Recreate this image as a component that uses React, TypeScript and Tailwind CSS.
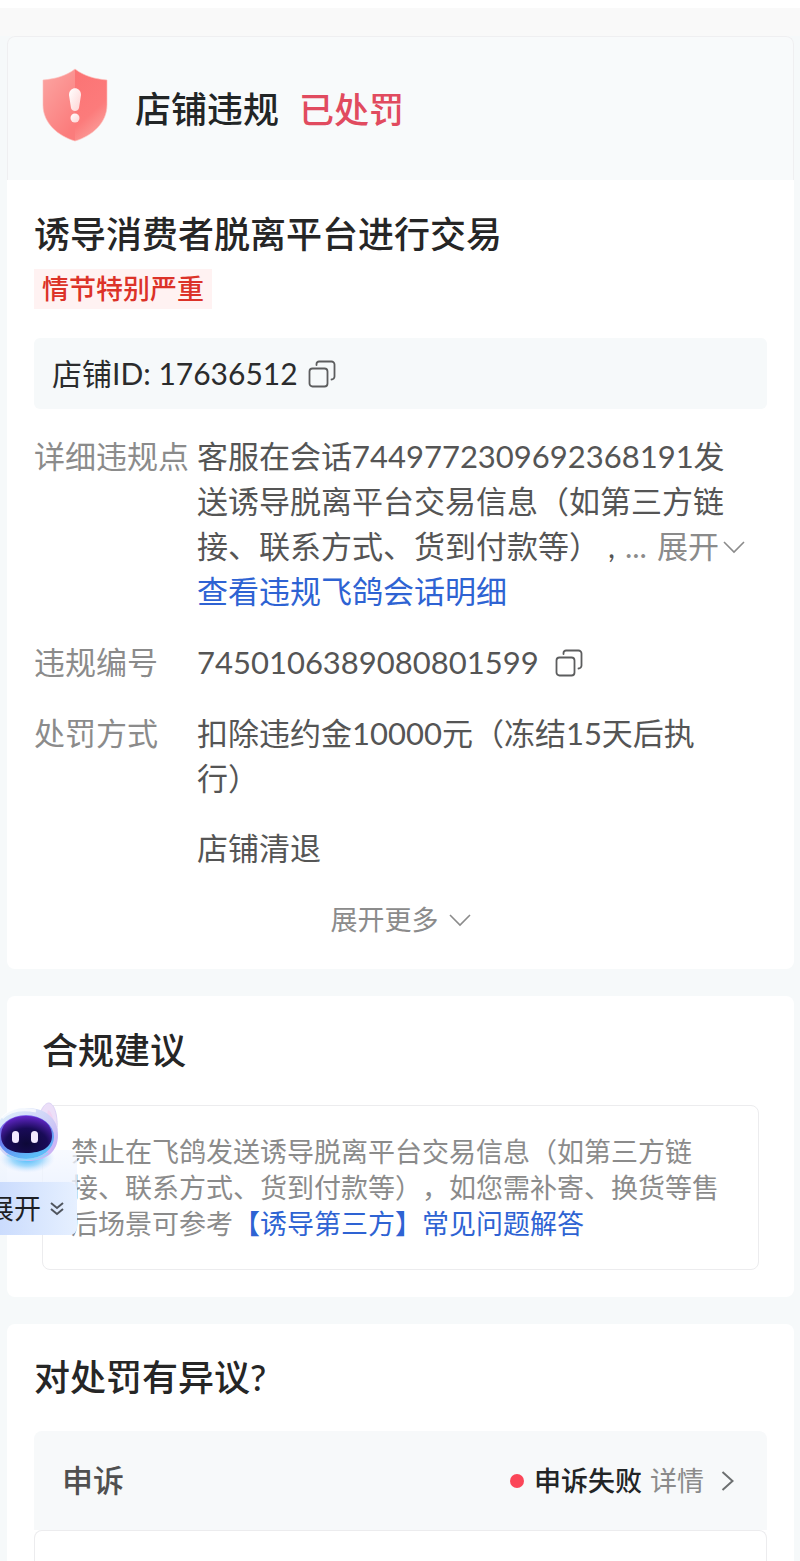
import type { ReactNode } from 'react'

function ShieldIcon() {
  return (
    <svg viewBox="0 0 66 74" className="mb-2 h-[74px] w-[66px] shrink-0" aria-hidden="true">
      <defs>
        <linearGradient id="shield-left" x1="0" y1="0" x2="0.6" y2="1">
          <stop offset="0" stopColor="#fba6a3" />
          <stop offset="1" stopColor="#fb7c7c" />
        </linearGradient>
        <linearGradient id="shield-right" x1="0" y1="0" x2="0.4" y2="1">
          <stop offset="0" stopColor="#fb7374" />
          <stop offset="0.7" stopColor="#fc7b7b" />
          <stop offset="1" stopColor="#fb9a97" />
        </linearGradient>
        <linearGradient id="shield-mark" x1="0" y1="0" x2="1" y2="1">
          <stop offset="0" stopColor="#fff" />
          <stop offset="1" stopColor="#fed3d3" />
        </linearGradient>
      </defs>
      <path d="M33 1C24 8 13 11 1 12v25c0 18 15 31 32 36z" fill="url(#shield-left)" />
      <path d="M33 1c9 7 20 10 32 11v25c0 18-15 31-32 36z" fill="url(#shield-right)" />
      <path d="M33 1C24 8 13 11 1 12v25c0 18 15 31 32 36 17-5 32-18 32-36V12C53 11 42 8 33 1z" fill="none" stroke="#fdc0bd" strokeOpacity="0.6" />
      <path d="M27 27c0-9 12-9 12 0l-2 13c-1 4-7 4-8 0z" fill="url(#shield-mark)" />
      <circle cx="33" cy="50" r="4.5" fill="url(#shield-mark)" />
    </svg>
  )
}

function CopyButton({ label }: { label: string }) {
  return (
    <button type="button" aria-label={label} className="shrink-0">
      <svg viewBox="0 0 28 28" className="h-7 w-7" fill="none" stroke="#5c5d5e" strokeWidth="1.8">
        <rect x="1.5" y="8.5" width="18" height="18" rx="3" />
        <path d="M8.500 5V4A2.500 2.500 0 0 1 11 1.500h12.500A3 3 0 0 1 26.500 4.500v12a3 3 0 0 1-3 3" strokeLinecap="round" />
      </svg>
    </button>
  )
}

function ChevronDown() {
  return (
    <svg viewBox="0 0 22 14" className="h-3.5 w-[22px] shrink-0" fill="none" stroke="currentColor" strokeWidth="1.6" aria-hidden="true">
      <path d="M1 2l10 10L21 2" />
    </svg>
  )
}

function Row({ label, children }: { label: string; children: ReactNode }) {
  return (
    <div className="flex">
      <dt className="w-[163px] shrink-0 whitespace-nowrap text-[#8b8b8b]">{label}</dt>
      <dd className="min-w-0 flex-1">{children}</dd>
    </div>
  )
}

function Assistant() {
  return (
    <button type="button" className="absolute -top-1 -left-[43px] h-[133px] w-[77px] overflow-hidden text-left">
      <span className="absolute inset-x-0 top-[48px] bottom-0 rounded-r-lg bg-linear-to-b from-[#f5f8ff]/70 to-[#e3edff]" />
      <svg viewBox="0 0 60 82" className="absolute top-0 left-0 h-[82px] w-[60px]" aria-hidden="true">
        <defs>
          <linearGradient id="bot-shell" x1="0" y1="0" x2="1" y2="1">
            <stop offset="0" stopColor="#dff4fb" />
            <stop offset="0.5" stopColor="#cfd2f7" />
            <stop offset="1" stopColor="#c9a5f3" />
          </linearGradient>
          <linearGradient id="bot-rim" x1="0" y1="0" x2="0.5" y2="1">
            <stop offset="0" stopColor="#8658e8" />
            <stop offset="0.5" stopColor="#6b7df0" />
            <stop offset="1" stopColor="#5cbdf8" />
          </linearGradient>
          <radialGradient id="bot-face" cx="0.5" cy="0.75" r="0.75">
            <stop offset="0" stopColor="#0d0838" />
            <stop offset="0.55" stopColor="#190b58" />
            <stop offset="1" stopColor="#6327c8" />
          </radialGradient>
          <radialGradient id="bot-glow">
            <stop offset="0" stopColor="#38b4fb" />
            <stop offset="0.55" stopColor="#8ed2fb" stopOpacity="0.8" />
            <stop offset="1" stopColor="#d8e5ff" stopOpacity="0" />
          </radialGradient>
        </defs>
        <ellipse cx="27" cy="56" rx="28" ry="15" fill="url(#bot-glow)" />
        <path d="M41 9C43 4 46 1 49 1c6 1 9 14 8 27l-4 8z" fill="#ecdff8" stroke="#dcd3f6" />
        <path d="M48 8c4 2 6 10 6 18l-8-9z" fill="#f5c9ed" opacity="0.6" />
        <path d="M-4 32C-4 16 9 6 27 6s31 10 31 27-12 26-31 26S-4 50-4 32z" fill="url(#bot-shell)" />
        <path d="M2 16C10 8 22 6 36 9" fill="none" stroke="#fff" strokeWidth="3" strokeOpacity="0.7" />
        <ellipse cx="26" cy="35" rx="28" ry="22" fill="url(#bot-rim)" />
        <path d="M1 34c0-13 10-20 25-20s26 7 26 20c0 11-10 17-26 17S1 45 1 34z" fill="url(#bot-face)" />
        <rect x="12" y="29" width="7" height="12" rx="3.5" fill="#f2e9ff" />
        <rect x="31" y="29" width="7" height="12" rx="3.5" fill="#f2e9ff" />
        <path d="M7 53c10 6 28 7 41-2" fill="none" stroke="#86dafc" strokeWidth="2" strokeOpacity="0.8" />
      </svg>
      <span className="absolute inset-x-0 bottom-0 flex h-[53px] items-center rounded-r-lg bg-linear-to-r from-[#cbdcfd] to-[#e6f0ff]">
        <span className="-ml-[13px] text-[27px] leading-9 text-[#1d1f24]">展开</span>
        <svg viewBox="0 0 14 14" className="ml-[9px] h-3.5 w-3.5 shrink-0" fill="none" stroke="#50555e" strokeWidth="2" aria-hidden="true">
          <path d="M1 1l6 5 6-5M1 7l6 5 6-5" />
        </svg>
      </span>
    </button>
  )
}

export default function App() {
  return (
    <div className="min-h-screen overflow-hidden border-t-8 border-white bg-[#f6f9fa] font-['Lato','Noto_Sans_CJK_SC',sans-serif] [text-spacing-trim:space-all]">
      <div className="h-7 bg-[#f9f9f9]" />
      <main className="flex flex-col gap-[27px] pr-1.5 pl-[7px]">
        <section className="rounded-lg bg-white">
          <header className="flex h-36 items-center rounded-t-lg border border-b-0 border-[#efeff1] bg-[#f8fafb] pl-[34px]">
            <ShieldIcon />
            <h1 className="ml-[27px] text-[36px] leading-[48px] font-medium text-[#222526]">店铺违规</h1>
            <strong className="ml-5 text-[35px] leading-[48px] font-medium text-[#e14b5f]">已处罚</strong>
          </header>

          <div className="px-[27px] pt-[30px] pb-[29px]">
            <h2 className="text-[36px] leading-[48px] font-medium text-[#262626]">诱导消费者脱离平台进行交易</h2>
            <div className="mt-[11px] flex">
              <span className="bg-[#fff2f2] px-2 text-[27px] leading-10 font-medium text-[#dc3228]">情节特别严重</span>
            </div>

            <div className="mt-[29px] flex h-[71px] items-center gap-2.5 rounded-md bg-[#f6f9fa] px-[18px] text-[30px] text-[#2b2c2d]">
              <span>店铺ID: 17636512</span>
              <CopyButton label="复制店铺ID" />
            </div>

            <dl className="mt-[25px] flex flex-col gap-[26px] text-[31px] leading-[45px] text-[#555]">
              <Row label="详细违规点">
                客服在会话7449772309692368191发
                <br />
                送诱导脱离平台交易信息（如第三方链
                <br />
                <span className="flex items-center whitespace-nowrap">
                  接、联系方式、货到付款等） ,<span className="ml-2.5 text-[#8b8b8b]">...</span>
                  <button type="button" className="ml-2.5 flex items-center gap-1 text-[#8b8b8b]">
                    展开
                    <ChevronDown />
                  </button>
                </span>
                <a href="#session" className="text-[#2e63d3]">
                  查看违规飞鸽会话明细
                </a>
              </Row>
              <Row label="违规编号">
                <div className="flex items-center gap-4">
                  7450106389080801599
                  <CopyButton label="复制违规编号" />
                </div>
              </Row>
              <Row label="处罚方式">
                <p>
                  扣除违约金10000元（冻结15天后执
                  <br />
                  行）
                </p>
                <p className="mt-[25px]">店铺清退</p>
              </Row>
            </dl>

            <button type="button" className="mx-auto mt-[29px] flex items-center gap-2.5 text-[27px] leading-10 text-[#8b8b8b]">
              展开更多
              <ChevronDown />
            </button>
          </div>
        </section>

        <section className="rounded-lg bg-white px-[35px] pt-[30px] pb-[27px]">
          <h2 className="text-[36px] leading-[48px] font-medium text-[#262626]">合规建议</h2>
          <div className="relative mt-[31px] rounded-lg border border-[#ececee] px-7 pt-7 pb-[27px]">
            <p className="text-[27px] leading-9 text-[#8b8b8b]">
              禁止在飞鸽发送诱导脱离平台交易信息（如第三方链
              <br />
              接、联系方式、货到付款等），如您需补寄、换货等售
              <br />
              后场景可参考
              <a href="#faq" className="text-[#2e63d3]">
                【诱导第三方】常见问题解答
              </a>
            </p>
            <Assistant />
          </div>
        </section>

        <section className="rounded-t-lg bg-white px-[27px] pt-[29px]">
          <h2 className="text-[36px] leading-[48px] font-medium text-[#262626]">对处罚有异议?</h2>
          <div className="mt-[30px] flex h-[99px] items-center rounded-t-lg bg-[#f7f9fa] pr-[33px] pl-7">
            <h3 className="text-[31px] leading-[45px] font-medium text-[#505050]">申诉</h3>
            <span className="ml-auto h-3.5 w-3.5 rounded-full bg-[#fb4658]" />
            <span className="ml-2.5 text-[27px] leading-9 font-medium text-[#222526]">申诉失败</span>
            <button type="button" className="ml-2 flex items-center gap-[17px] text-[27px] leading-9 text-[#8b8b8b]">
              详情
              <svg viewBox="0 0 13 20" className="h-5 w-[13px]" fill="none" stroke="#6d7071" strokeWidth="2" aria-hidden="true">
                <path d="M1.500 1l10 9-10 9" />
              </svg>
            </button>
          </div>
          <div className="h-[31px] rounded-t-lg border border-b-0 border-[#ececee]" />
        </section>
      </main>
    </div>
  )
}
